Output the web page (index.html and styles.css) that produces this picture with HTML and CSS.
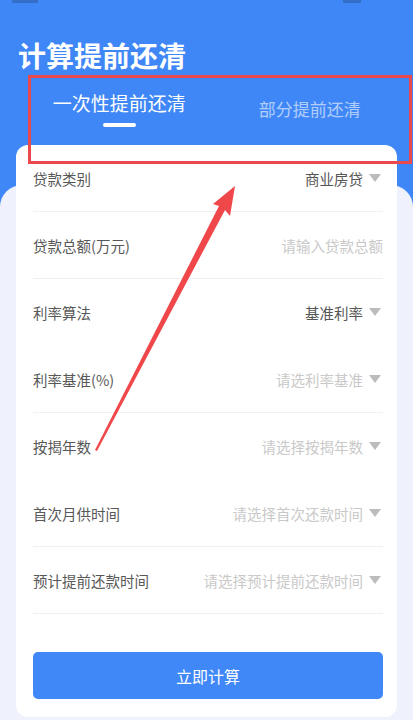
FILE: index.html
```html
<!DOCTYPE html>
<html lang="zh-CN">
<head>
  <meta charset="UTF-8" />
  <meta name="viewport" content="width=device-width, initial-scale=1.0"/>
  <title>计算提前还清</title>

  <link rel="stylesheet" href="styles.css">
</head>

<body>
  <div class="header">
    <div class="statusBar">
      <i class="statusDot"></i>
      <i class="statusDot small"></i>
    </div>
    <h1 class="pageTitle">计算提前还清</h1>

    <div class="tabs">
      <div class="tab active">
        <span>一次性提前还清</span>
        <i class="tabLine"></i>
      </div>
      <div class="tab">
        <span>部分提前还清</span>
      </div>
    </div>
  </div>

  <div class="panel">
    <div class="card">
      <div class="row">
        <span class="label">贷款类别</span>
        <span class="value">商业房贷<i class="caret"></i></span>
      </div>
      <div class="row">
        <span class="label">贷款总额(万元)</span>
        <span class="value placeholder">请输入贷款总额</span>
      </div>
      <div class="row noLine">
        <span class="label">利率算法</span>
        <span class="value">基准利率<i class="caret"></i></span>
      </div>
      <div class="row">
        <span class="label">利率基准(%)</span>
        <span class="value placeholder">请选利率基准<i class="caret"></i></span>
      </div>
      <div class="row noLine">
        <span class="label">按揭年数</span>
        <span class="value placeholder">请选择按揭年数<i class="caret"></i></span>
      </div>
      <div class="row">
        <span class="label">首次月供时间</span>
        <span class="value placeholder">请选择首次还款时间<i class="caret"></i></span>
      </div>
      <div class="row">
        <span class="label">预计提前还款时间</span>
        <span class="value placeholder">请选择预计提前还款时间<i class="caret"></i></span>
      </div>

      <button type="button" class="submitBtn">立即计算</button>
    </div>
  </div>

  <!-- annotation drawn over the screenshot -->
  <div class="markBox"></div>
  <svg class="markArrow" width="413" height="720" viewBox="0 0 413 720">
    <polygon fill="#f0474b" points="235,186 213,204 219,206 95,450 97,451 225,210 230,216" />
  </svg>
</body>
</html>
```

FILE: styles.css
```css
* {
  box-sizing: border-box;
  margin: 0;
  padding: 0;
  font-family: "Noto Sans CJK SC", "Noto Sans", sans-serif;
}

body {
  background: #3f87f7;
  width: 413px;
  height: 720px;
  overflow: hidden;
  position: relative;
  display: flex;
  flex-direction: column;
}

.header {
  padding: 0 0 58px 0;
}

.statusBar {
  display: flex;
  justify-content: space-between;
  height: 4px;
  padding: 0 52px 0 12px;
}

.statusDot {
  display: block;
  width: 26px;
  height: 3px;
  background: #2f5da8;
  opacity: 0.6;
}

.statusDot.small {
  width: 18px;
}

.pageTitle {
  color: #fff;
  font-size: 28px;
  font-weight: bold;
  line-height: 32px;
  padding: 35px 0 0 18px;
}

.tabs {
  display: flex;
  align-items: center;
  margin: 19px 8px 0 24px;
}

.tab {
  flex: 1;
  display: flex;
  flex-direction: column;
  align-items: center;
  gap: 7px;
  color: rgba(255, 255, 255, 0.6);
  font-size: 17px;
  line-height: 24px;
}

.tab.active {
  color: #fff;
  font-size: 19px;
  line-height: 26px;
}

.tabLine {
  display: block;
  width: 33px;
  height: 4px;
  border-radius: 2px;
  background: #fff;
}

.panel {
  flex: 1;
  display: flex;
  flex-direction: column;
  background: #eff1fc;
  border-radius: 22px 22px 0 0;
  padding: 0 16px;
}

.card {
  margin-top: -40px;
  background: #fff;
  border-radius: 12px;
  padding: 0 14px 18px 17px;
}

.row {
  display: flex;
  justify-content: space-between;
  align-items: center;
  height: 67px;
  border-bottom: 1px solid #f0f0f0;
  font-size: 14.5px;
}

.row.noLine {
  border-bottom-color: transparent;
}

.label {
  color: #585858;
}

.value {
  display: flex;
  align-items: center;
  color: #555;
}

.value.placeholder {
  color: #c9c9c9;
}

.caret {
  display: block;
  width: 0;
  height: 0;
  margin: 0 2px 0 6px;
  border-left: 6px solid transparent;
  border-right: 6px solid transparent;
  border-top: 8px solid #bcbcbc;
}

.submitBtn {
  display: block;
  width: 100%;
  height: 47px;
  margin-top: 38px;
  border: none;
  border-radius: 5px;
  background: #4087f7;
  color: #fff;
  font-size: 16px;
  cursor: pointer;
}

.markBox {
  position: absolute;
  left: 28px;
  top: 75px;
  width: 384px;
  height: 89px;
  border: 3px solid #ea4a4d;
}

.markArrow {
  position: absolute;
  left: 0;
  top: 0;
}
```
